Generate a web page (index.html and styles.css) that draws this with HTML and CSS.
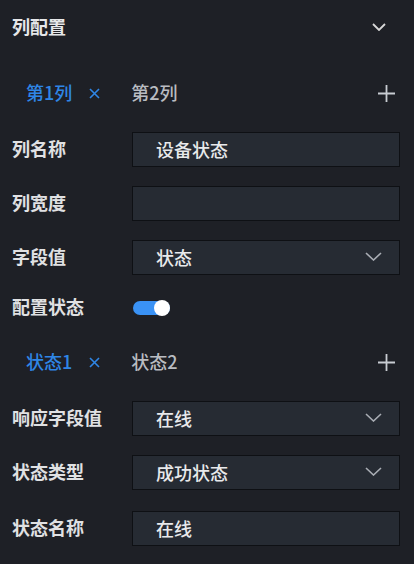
FILE: index.html
```html
<!DOCTYPE html>
<html lang="zh">
<head>
<meta charset="utf-8">
<link rel="stylesheet" href="styles.css">
</head>
<body>
<div class="panel">
  <div class="header">
    <span class="title">列配置</span>
    <svg class="chev-head" width="14" height="8" viewBox="0 0 14 8"><path d="M1 1 L7 7 L13 1" fill="none" stroke="#d8d8d8" stroke-width="1.8"/></svg>
  </div>

  <div class="tabs">
    <span class="tab active">第1列</span>
    <svg class="close" width="11" height="11" viewBox="0 0 11 11"><path d="M1 1 L10 10 M10 1 L1 10" stroke="#2f86e6" stroke-width="1.6"/></svg>
    <span class="tab">第2列</span>
    <svg class="plus" width="17" height="17" viewBox="0 0 17 17"><path d="M8.5 0 V17 M0 8.5 H17" stroke="#c8ccd2" stroke-width="1.8"/></svg>
  </div>

  <div class="row">
    <span class="label">列名称</span>
    <div class="field">设备状态</div>
  </div>
  <div class="row">
    <span class="label">列宽度</span>
    <div class="field"></div>
  </div>
  <div class="row">
    <span class="label">字段值</span>
    <div class="field select">状态
      <svg class="chev" width="17" height="9" viewBox="0 0 17 9"><path d="M1 1 L8.5 8 L16 1" fill="none" stroke="#a9adb4" stroke-width="1.6"/></svg>
    </div>
  </div>
  <div class="row toggle-row">
    <span class="label">配置状态</span>
    <span class="switch"><span class="knob"></span></span>
  </div>

  <div class="tabs tabs-state">
    <span class="tab active">状态1</span>
    <svg class="close" width="11" height="11" viewBox="0 0 11 11"><path d="M1 1 L10 10 M10 1 L1 10" stroke="#2f86e6" stroke-width="1.6"/></svg>
    <span class="tab">状态2</span>
    <svg class="plus" width="17" height="17" viewBox="0 0 17 17"><path d="M8.5 0 V17 M0 8.5 H17" stroke="#c8ccd2" stroke-width="1.8"/></svg>
  </div>

  <div class="row">
    <span class="label">响应字段值</span>
    <div class="field select">在线
      <svg class="chev" width="17" height="9" viewBox="0 0 17 9"><path d="M1 1 L8.5 8 L16 1" fill="none" stroke="#a9adb4" stroke-width="1.6"/></svg>
    </div>
  </div>
  <div class="row">
    <span class="label">状态类型</span>
    <div class="field select">成功状态
      <svg class="chev" width="17" height="9" viewBox="0 0 17 9"><path d="M1 1 L8.5 8 L16 1" fill="none" stroke="#a9adb4" stroke-width="1.6"/></svg>
    </div>
  </div>
  <div class="row last">
    <span class="label">状态名称</span>
    <div class="field">在线</div>
  </div>
</div>
</body>
</html>
```

FILE: styles.css
```css
html, body {
  margin: 0;
  padding: 0;
  background: #1e2026;
}
body {
  font-family: "Noto Sans CJK SC", "Noto Sans", sans-serif;
  font-size: 18px;
  color: #e2e3e5;
  width: 414px;
  height: 564px;
  overflow: hidden;
}
.panel {
  display: flex;
  flex-direction: column;
  padding: 0 14px 0 12px;
}
.header {
  height: 54px;
  display: flex;
  align-items: center;
  justify-content: space-between;
}
.title {
  font-weight: 700;
  color: #e6e7e9;
  padding-bottom: 3px;
}
.chev-head {
  margin-right: 14px;
}
.tabs {
  height: 54px;
  margin-top: 12px;
  margin-bottom: 12px;
  display: flex;
  align-items: center;
  padding-left: 14px;
}
.tabs-state {
  margin-top: 13px;
}
.tab {
  color: #b9bcc1;
  font-weight: 500;
  padding-bottom: 2px;
}
.tab.active {
  color: #2f86e6;
}
.close {
  margin-left: 17px;
  margin-right: 31px;
}
.plus {
  margin-left: auto;
  margin-right: 5px;
}
.row {
  height: 35px;
  margin-bottom: 19px;
  display: flex;
  align-items: center;
}
.row.last {
  margin-top: 2px;
}
.label {
  width: 120px;
  flex: none;
  font-weight: 700;
  color: #e0e1e3;
  padding-bottom: 4px;
}
.field {
  flex: 1;
  height: 35px;
  box-sizing: border-box;
  background: #262b33;
  border: 1px solid #0e1014;
  display: flex;
  align-items: center;
  padding-left: 23px;
  padding-right: 17px;
  padding-bottom: 2px;
  font-weight: 500;
  color: #e8e9eb;
}
.select {
  justify-content: space-between;
}
.toggle-row {
  height: 28px;
  margin-bottom: 0;
}
.switch {
  width: 37px;
  height: 14px;
  border-radius: 7px;
  background: #3a92f5;
  position: relative;
  margin-left: 1px;
  margin-top: 0;
}
.knob {
  position: absolute;
  right: 0;
  top: -1px;
  width: 16px;
  height: 16px;
  border-radius: 50%;
  background: #ffffff;
}
```
